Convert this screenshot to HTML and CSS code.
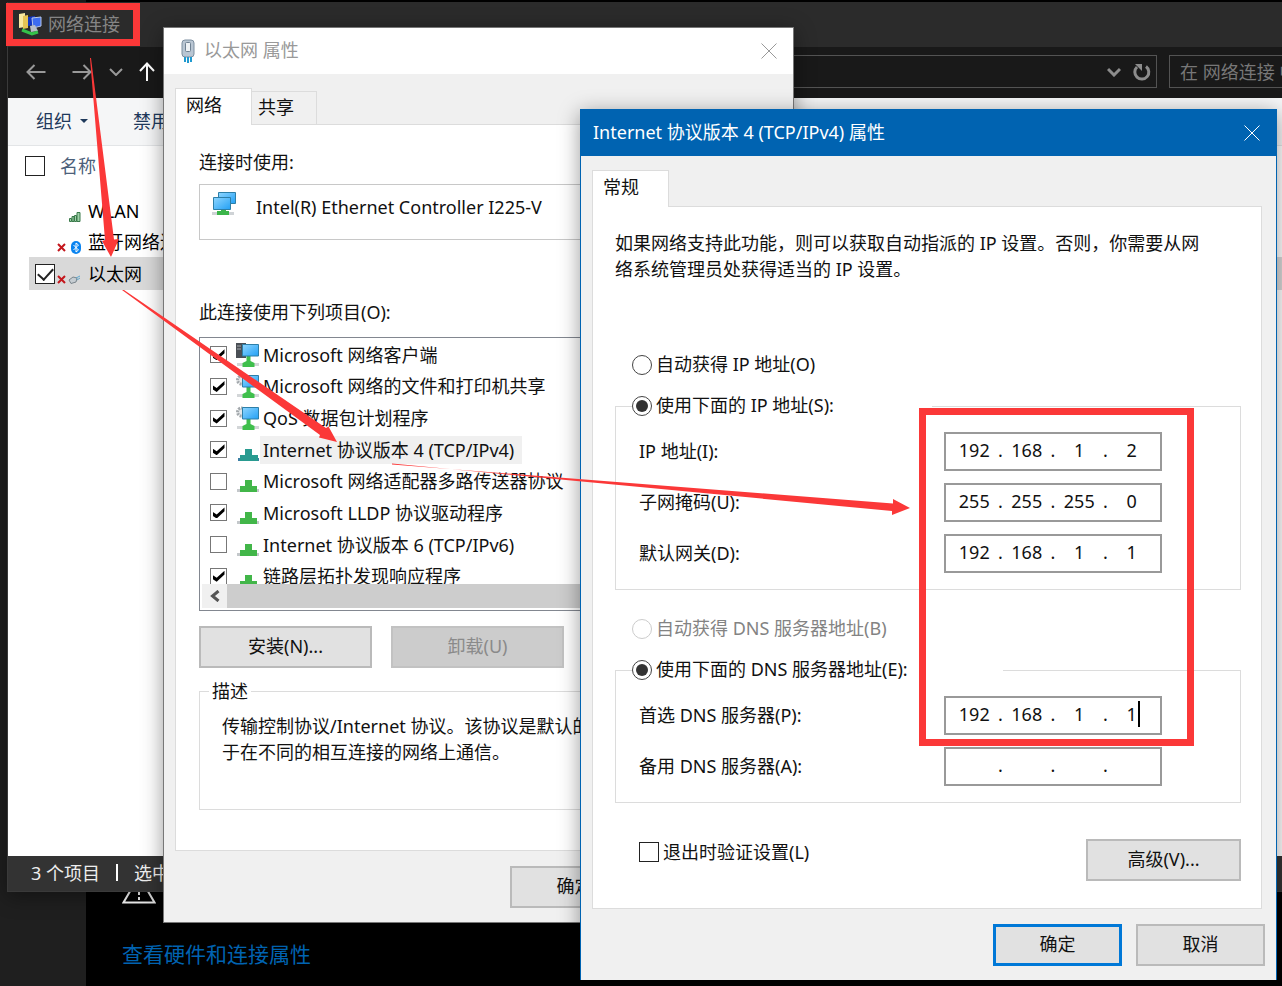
FILE: index.html
```html
<!DOCTYPE html>
<html lang="zh-CN">
<head>
<meta charset="utf-8">
<title>网络连接</title>
<link rel="stylesheet" href="styles.css">
</head>
<body>
<svg class="defs" aria-hidden="true">
  <defs>
    <linearGradient id="screen" x1="0" y1="0" x2="1" y2="1"><stop offset="0" stop-color="#8fd6ff"/><stop offset="1" stop-color="#22a0f5"/></linearGradient>
  </defs>
  <symbol id="monitor" viewBox="0 0 24 24">
    <path d="M1 20h22v3H1z" fill="#d3d6d8"/>
    <path d="M10.500 13h4v5l4 2v4h-12v-4l4-2z" fill="#3fbf4c"/>
    <path d="M6.500 1.500h16v11.500h-16z" fill="url(#screen)" stroke="#2d7fa8"/>
  </symbol>
  <symbol id="client" viewBox="0 0 24 24">
    <path d="M0 0h10v15H0z" fill="#4a4f55"/><path d="M1 3h4M1 6h4" stroke="#a5aaaf"/>
    <use href="#monitor"/>
  </symbol>
  <symbol id="service" viewBox="0 0 24 24">
    <circle cx="5.500" cy="6" r="4" fill="#e4e7e9" stroke="#a3a8ac" stroke-width="3" stroke-dasharray="2 1"/>
    <use href="#monitor"/>
  </symbol>
  <symbol id="protocol" viewBox="0 0 24 24">
    <path d="M1 20h22v3H1z" fill="#c4c8cb"/><path d="M9 11h7v6h5v6H4v-6h5z" fill="#42b649"/>
  </symbol>
  <symbol id="protocol-on" viewBox="0 0 24 24">
    <path d="M2 20h21v3H2z" fill="#3b7fa4"/><path d="M9 11h7v6h6v6H4v-6h5z" fill="#299b90"/>
  </symbol>
  <symbol id="close" viewBox="0 0 16 16"><path d="M.5.5l15 15M15.500.5l-15 15" fill="none" stroke="currentColor"/></symbol>
  <symbol id="cross" viewBox="0 0 9 9"><path d="M1 1l7 7M8 1L1 8" stroke="#c4161c" stroke-width="2"/></symbol>
</svg>

<div class="desktop">
  <aside class="settings-side"></aside>
  <main class="settings-main">
    <svg class="warn" viewBox="0 0 34 30"><path d="M17 2L1.500 28.500h31z" fill="none" stroke="#fff" stroke-width="2"/><path d="M17 10v11M17 23v3" stroke="#fff" stroke-width="2"/></svg>
    <a class="settings-link" href="#">查看硬件和连接属性</a>
  </main>

  <section class="window explorer">
    <header class="ex-title">
      <svg width="24" height="24" viewBox="0 0 24 24">
        <path d="M1 2l6-1v14l-6 1z" fill="#f8e9a0"/><path d="M5 4l5-1v13l-5 1z" fill="#e5c455"/>
        <path d="M10 5l7-1v9l-7 1z" fill="#1237c4"/><path d="M14 6l9-1v9l-8 2z" fill="#3d6df0" stroke="#b9c8e8"/>
        <path d="M12 14l5-1 3 6-7 1z" fill="#b8c0c8"/><path d="M4 18l10 4 6-2" fill="none" stroke="#35c24a" stroke-width="3"/>
      </svg>
      <span>网络连接</span>
    </header>
    <nav class="ex-nav">
      <button class="nav-btn" aria-label="后退"><svg width="20" height="16" viewBox="0 0 20 16"><path d="M19.500 8H1.500M8.500 1l-7 7 7 7" class="line"/></svg></button>
      <button class="nav-btn" aria-label="前进"><svg width="20" height="16" viewBox="0 0 20 16"><path d="M.5 8h18M11.500 1l7 7-7 7" class="line"/></svg></button>
      <button class="nav-btn recent" aria-label="最近"><svg width="14" height="8" viewBox="0 0 14 8"><path d="M1 1l6 6 6-6" class="line"/></svg></button>
      <button class="nav-btn up" aria-label="上移"><svg width="16" height="19" viewBox="0 0 16 19"><path d="M8 19V2M1 9l7-7.500L15 9" class="line"/></svg></button>
      <div class="address">
        <button class="nav-btn" aria-label="历史"><svg width="14" height="10" viewBox="0 0 14 10"><path d="M1 2l6 6 6-6" class="bold"/></svg></button>
        <button class="nav-btn" aria-label="刷新"><svg width="18" height="18" viewBox="0 0 18 18"><path d="M13 3.500a7 7 0 1 1-9 .5" class="bold"/><path d="M2 1h7v7z" fill="#8c8c8c"/></svg></button>
      </div>
      <input class="search" type="text" aria-label="搜索" placeholder="在 网络连接 中搜索">
    </nav>
    <div class="ex-commands">
      <button>组织<i class="caret-down"></i></button>
      <button>禁用</button>
    </div>
    <div class="ex-files">
      <div class="ex-head"><input type="checkbox" class="box" id="all"><label for="all">名称</label></div>
      <ul class="ex-list">
        <li>
          <span class="pick"></span>
          <span class="state"><svg width="12" height="10" viewBox="0 0 12 10"><path d="M.5 9.500v-3h2v3zM3 9.500v-5h2v5zM5.500 9.500v-6h2v6zM8 9.500v-9h3v9z" fill="#9fd0a8" stroke="#3a7a4b"/></svg></span>
          <span>WLAN</span>
        </li>
        <li>
          <span class="pick"></span>
          <span class="state"><svg width="9" height="9"><use href="#cross"/></svg><svg width="10" height="13" viewBox="0 0 10 13"><rect width="10" height="13" rx="5" fill="#0a84f0"/><path d="M2.500 4l5 5L5 11V2l2.500 2-5 5" fill="none" stroke="#fff"/></svg></span>
          <span>蓝牙网络连接</span>
        </li>
        <li class="selected">
          <span class="pick"><input type="checkbox" class="box" checked aria-label="以太网"></span>
          <span class="state"><svg width="9" height="9"><use href="#cross"/></svg><svg width="13" height="9" viewBox="0 0 13 9"><path d="M1 5l4-3 4 1-1 4-5 1.500z" fill="#c6cdd2" stroke="#7a858c"/><path d="M8 3l4-2M9 5l3-2" stroke="#5aa7d0"/></svg></span>
          <span>以太网</span>
        </li>
      </ul>
    </div>
    <footer class="ex-status"><span>3 个项目</span><i class="divider"></i><span>选中 1 个项目</span></footer>
  </section>

  <section class="window dialog ethernet" role="dialog" aria-label="以太网 属性">
    <header class="dlg-title">
      <svg width="16" height="24" viewBox="0 0 16 24"><rect x="2" y="1" width="12" height="17" rx="3" fill="#b9c6d3" stroke="#7d8fa0"/><rect x="5.500" y="3.500" width="5" height="9" rx="1" fill="#eef2f5" stroke="#6f8192"/><path d="M5 18v5M8 18v6M11 18v5" stroke="#1f9ad0" stroke-width="2"/></svg>
      <h2>以太网 属性</h2>
      <button class="close" aria-label="关闭"><svg width="16" height="16"><use href="#close"/></svg></button>
    </header>
    <div class="dlg-body">
      <div class="tabs" role="tablist"><button class="tab active" role="tab">网络</button><button class="tab" role="tab">共享</button></div>
      <div class="panel" role="tabpanel">
        <p>连接时使用:</p>
        <div class="adapter">
          <svg width="24" height="24" viewBox="0 0 24 24"><path d="M0 20h22v3H0z" fill="#cfd3d6"/><path d="M9 17h5v2h3v4H5v-4h4z" fill="#3cb54a"/><path d="M6.500.5h17v11h-17z" fill="url(#screen)" stroke="#2d7fa8"/><path d="M1.500 5.500h17v12h-17z" fill="url(#screen)" stroke="#2d7fa8"/></svg>
          <span>Intel(R) Ethernet Controller I225-V</span>
        </div>
        <p class="items-label">此连接使用下列项目(O):</p>
        <div class="items">
          <div class="items-view">
            <ul>
              <li><label><input type="checkbox" class="tick" checked><svg><use href="#client"/></svg><span>Microsoft 网络客户端</span></label></li>
              <li><label><input type="checkbox" class="tick" checked><svg><use href="#service"/></svg><span>Microsoft 网络的文件和打印机共享</span></label></li>
              <li><label><input type="checkbox" class="tick" checked><svg><use href="#service"/></svg><span>QoS 数据包计划程序</span></label></li>
              <li class="current"><label><input type="checkbox" class="tick" checked><svg><use href="#protocol-on"/></svg><span>Internet 协议版本 4 (TCP/IPv4)</span></label></li>
              <li><label><input type="checkbox" class="tick"><svg><use href="#protocol"/></svg><span>Microsoft 网络适配器多路传送器协议</span></label></li>
              <li><label><input type="checkbox" class="tick" checked><svg><use href="#protocol"/></svg><span>Microsoft LLDP 协议驱动程序</span></label></li>
              <li><label><input type="checkbox" class="tick"><svg><use href="#protocol"/></svg><span>Internet 协议版本 6 (TCP/IPv6)</span></label></li>
              <li><label><input type="checkbox" class="tick" checked><svg><use href="#protocol"/></svg><span>链路层拓扑发现响应程序</span></label></li>
            </ul>
          </div>
          <div class="scroll"><button aria-label="向左滚动"><svg width="10" height="12" viewBox="0 0 10 12"><path d="M8.500 1l-6 5 6 5" fill="none" stroke="#555" stroke-width="3"/></svg></button><div class="thumb"></div></div>
        </div>
        <div class="actions"><button class="btn">安装(N)...</button><button class="btn" disabled>卸载(U)</button></div>
        <fieldset class="about">
          <legend>描述</legend>
          <p>传输控制协议/Internet 协议。该协议是默认的<br>于在不同的相互连接的网络上通信。</p>
        </fieldset>
      </div>
      <div class="dlg-footer"><button class="btn">确定</button><button class="btn">取消</button></div>
    </div>
  </section>

  <section class="window dialog ipv4" role="dialog" aria-label="Internet 协议版本 4 (TCP/IPv4) 属性">
    <header class="dlg-title">
      <h2>Internet 协议版本 4 (TCP/IPv4) 属性</h2>
      <button class="close" aria-label="关闭"><svg width="16" height="16"><use href="#close"/></svg></button>
    </header>
    <div class="dlg-body">
      <div class="tabs" role="tablist"><button class="tab active" role="tab">常规</button></div>
      <div class="panel" role="tabpanel">
        <p>如果网络支持此功能，则可以获取自动指派的 IP 设置。否则，你需要从网<br>络系统管理员处获得适当的 IP 设置。</p>
        <label class="choice ip-auto"><input type="radio" name="ip"><span>自动获得 IP 地址(O)</span></label>
        <fieldset class="group">
          <legend><label class="choice"><input type="radio" name="ip" checked><span>使用下面的 IP 地址(S):</span></label></legend>
          <div class="row"><label for="ip1">IP 地址(I):</label>
            <div class="ip"><input id="ip1" value="192"><b>.</b><input aria-label="2" value="168"><b>.</b><input aria-label="3" value="1"><b>.</b><input aria-label="4" value="2"></div></div>
          <div class="row"><label for="mask1">子网掩码(U):</label>
            <div class="ip"><input id="mask1" value="255"><b>.</b><input aria-label="2" value="255"><b>.</b><input aria-label="3" value="255"><b>.</b><input aria-label="4" value="0"></div></div>
          <div class="row"><label for="gw1">默认网关(D):</label>
            <div class="ip"><input id="gw1" value="192"><b>.</b><input aria-label="2" value="168"><b>.</b><input aria-label="3" value="1"><b>.</b><input aria-label="4" value="1"></div></div>
        </fieldset>
        <label class="choice dns-auto"><input type="radio" name="dns" disabled><span>自动获得 DNS 服务器地址(B)</span></label>
        <fieldset class="group wide">
          <legend><label class="choice"><input type="radio" name="dns" checked><span>使用下面的 DNS 服务器地址(E):</span></label></legend>
          <div class="row"><label for="dns1">首选 DNS 服务器(P):</label>
            <div class="ip"><input id="dns1" value="192"><b>.</b><input aria-label="2" value="168"><b>.</b><input aria-label="3" value="1"><b>.</b><input aria-label="4" value="1"><i class="cursor"></i></div></div>
          <div class="row"><label for="alt1">备用 DNS 服务器(A):</label>
            <div class="ip"><input id="alt1"><b>.</b><input aria-label="2"><b>.</b><input aria-label="3"><b>.</b><input aria-label="4"></div></div>
        </fieldset>
        <div class="verify">
          <label><input type="checkbox" class="box">退出时验证设置(L)</label>
          <button class="btn">高级(V)...</button>
        </div>
      </div>
      <div class="dlg-footer"><button class="btn primary">确定</button><button class="btn">取消</button></div>
    </div>
  </section>

  <svg class="marks" width="1282" height="986" aria-hidden="true">
    <g fill="none" stroke="#fb3838" stroke-width="7">
      <rect x="9.500" y="6.500" width="127" height="36"/>
      <rect x="922.500" y="411.500" width="268" height="331"/>
    </g>
    <g fill="#fb3838">
      <path d="M90 58L105 240L102 241L111 257L119 239L114 239.500L91 58z"/>
      <path d="M122 290L320 435L319 437.500L337 442L328.500 426.500L326 428L124 290z"/>
      <path d="M392 463.500L892 511L892 515L910 508L893 499L893 503.500L392 464.500z"/>
    </g>
  </svg>
</div>
</body>
</html>
```
FILE: styles.css
```css
* { box-sizing: border-box; }

body, button, input {
  font-family: "Noto Sans", "Noto Sans CJK SC", sans-serif;
  font-size: 18px;
  line-height: 26px;
}

body { margin: 0; background: #000; color: #111; }
p, h2, ul { margin: 0; padding: 0; list-style: none; }
button { padding: 0; border: 0; background: none; color: inherit; }
svg { flex: none; display: block; }
.defs { position: absolute; width: 0; height: 0; }

.desktop {
  position: relative;
  display: flex;
  min-height: 100vh;
  overflow: hidden;
  white-space: nowrap;
}

/* settings page behind the windows */
.settings-side { width: 86px; background: #1f1f1f; }
.settings-main {
  flex: 1;
  display: flex;
  flex-direction: column;
  justify-content: flex-end;
  align-items: flex-start;
  gap: 35px;
  padding: 0 36px 17px;
}
.warn { width: 34px; height: 30px; }
.settings-link { color: #0063b1; font-size: 21px; line-height: 30px; text-decoration: none; }

.window { position: absolute; box-shadow: 0 4px 20px rgba(0, 0, 0, .4); }

/* explorer */
.explorer { left: 7px; right: -80px; top: 2px; border: 1px solid #3a3a3a; border-top: 0; }
.ex-title {
  display: flex;
  align-items: center;
  gap: 6px;
  height: 45px;
  padding: 0 0 2px 10px;
  background: #2b2b2b;
  color: #858585;
}
.ex-nav {
  display: flex;
  align-items: center;
  height: 51px;
  padding: 0 12px 2px 18px;
  gap: 12px;
  background: #191919;
}
.nav-btn { display: flex; justify-content: center; align-items: center; width: 34px; height: 34px; margin-left: -7px; }
.nav-btn + .nav-btn { margin-left: 0; }
.ex-nav > .nav-btn.recent { width: 14px; margin-left: -2px; }
.ex-nav > .nav-btn.up { width: 16px; margin-left: 4px; }
.line { fill: none; stroke: #999; stroke-width: 2; }
.up .line { stroke: #fff; }
.bold { fill: none; stroke: #8c8c8c; stroke-width: 3; }
.address {
  flex: 1;
  display: flex;
  justify-content: flex-end;
  height: 33px;
  border: 1px solid #535353;
}
.address .nav-btn { width: 28px; height: 31px; }
.search {
  width: 180px;
  height: 33px;
  padding: 0 10px;
  border: 1px solid #535353;
  background: #191919;
  color: #ddd;
}
.search::placeholder { color: #777; opacity: 1; }
.ex-commands {
  display: flex;
  gap: 45px;
  height: 48px;
  padding: 0 0 2px 28px;
  border-bottom: 1px solid #e3e5e7;
  background: #f5f6f7;
  color: #1e395b;
}
.ex-commands button { display: flex; align-items: center; gap: 8px; }
.caret-down { border: 4px solid transparent; border-top-color: #1e395b; border-bottom: 0; }
.ex-files { min-height: 710px; background: #fff; color: #000; }
.ex-head { display: flex; align-items: center; gap: 15px; height: 40px; padding-left: 17px; color: #4c607a; }
.ex-list { padding: 9px 0 0 21px; }
.ex-list li { display: flex; align-items: center; height: 31px; }
.ex-list .selected { height: 33px; background: #d9d9d9; }
.pick { width: 28px; padding-left: 6px; }
.state { display: flex; justify-content: flex-end; align-items: center; gap: 5px; width: 24px; margin-right: 7px; padding-top: 12px; }
.selected .state { gap: 2px; }
.ex-status { display: flex; align-items: center; gap: 16px; height: 35px; padding: 0 0 2px 23px; background: #333; color: #eee; }
.divider { width: 2px; height: 17px; background: #fff; }

/* form controls */
.box, .tick, .choice input { appearance: none; flex: none; display: grid; place-items: center; margin: 0; background: #fff; }
.box { width: 20px; height: 20px; border: 1px solid #222; }
.box:checked::before {
  content: "";
  width: 7px;
  height: 13px;
  margin-bottom: 5px;
  border: solid #222;
  border-width: 0 2px 2px 0;
  transform: rotate(42deg);
}
.tick { width: 17px; height: 17px; border: 1px solid #777; }
.tick:checked::before {
  content: "";
  width: 12px;
  height: 11px;
  background: #000;
  clip-path: polygon(0 40%, 35% 65%, 100% 0, 100% 35%, 35% 100%, 0 75%);
}
.choice { display: flex; align-items: center; gap: 4px; width: max-content; height: 28px; }
.choice input { width: 20px; height: 20px; border: 1px solid #444; border-radius: 50%; }
.choice input:checked::before { content: ""; width: 12px; height: 12px; border-radius: 50%; background: #333; }
.choice input:disabled { border-color: #ccc; }
.choice span { padding-bottom: 3px; }
.btn { width: 129px; height: 42px; padding-bottom: 2px; border: 2px solid #bababa; background: #e1e1e1; color: #111; }
.btn:disabled { border-color: #c2c2c2; background: #ccc; color: #8a8a8a; }
.btn.primary { border: 3px solid #0078d7; }

/* property dialogs */
.dialog { background: #f0f0f0; }
.dlg-title { display: flex; align-items: center; gap: 8px; height: 46px; }
.dlg-title h2 { flex: 1; padding-bottom: 2px; font-size: 18px; font-weight: 400; }
.close { padding: 8px; margin-right: 8px; }
.dlg-body { padding: 14px 11px; }
.tabs { display: flex; align-items: flex-end; }
.tab { height: 33px; padding: 0 22px 2px 6px; border: 1px solid #dcdcdc; border-left: 0; border-bottom: 0; }
.tab.active { height: 37px; margin-bottom: -1px; padding: 0 29px 4px 10px; border-left: 1px solid #dcdcdc; background: #fff; }
.panel { border: 1px solid #dcdcdc; background: #fff; }
.dlg-footer { display: flex; justify-content: flex-end; gap: 14px; padding-top: 15px; }
fieldset { margin: 0; min-width: 0; border: 1px solid #dcdcdc; }

.ethernet { left: 163px; top: 27px; width: 631px; border: 1px solid #777; }
.ethernet .dlg-title { padding-left: 16px; background: #fff; color: #999; }
.ethernet .panel { padding: 24px 23px 40px; }
.adapter { display: flex; gap: 20px; height: 56px; margin-top: 9px; padding: 7px 12px; border: 1px solid #c8c8c8; }
.adapter span { padding-top: 2px; }
.items-label { margin-top: 59px; }
.items { margin-top: 12px; padding: 2px; border: 1px solid #828790; }
.items-view { height: 244px; overflow: hidden; }
.items ul { display: grid; grid-template-rows: repeat(8, 1fr); height: 253px; }
.items li { display: flex; align-items: stretch; }
.items label { display: flex; align-items: center; padding: 0 0 2px 8px; }
.items label svg { width: 24px; height: 24px; margin: 0 0 0 9px; }
.items label span { padding: 1px 8px 1px 3px; }
.current label span { background: #f0f0f0; }
.scroll { display: flex; height: 24px; background: #f0f0f0; }
.scroll button { display: grid; place-items: center; width: 25px; }
.thumb { flex: 1; background: #cdcdcd; }
.actions { display: flex; gap: 19px; margin-top: 15px; }
.actions .btn { width: 173px; }
.about { margin-top: 10px; padding: 9px 22px 44px; }
.about legend { margin-left: -13px; padding: 0 3px; }

.ipv4 { left: 580px; top: 109px; width: 697px; border: 1px solid #0063b1; border-bottom-width: 0; }
.ipv4 .dlg-title { padding-left: 12px; background: #0063b1; color: #fff; }
.ipv4 .panel { margin-right: 3px; padding: 23px 20px 27px 22px; }
.ip-auto { margin: 69px 0 13px 17px; }
.dns-auto { margin: 25px 0 13px 17px; color: #838383; }
.group { display: grid; gap: 12px; padding: 12px 78px 16px 23px; }
.group legend { width: 300px; height: 28px; margin-left: -7px; padding: 0; }
.group.wide legend { width: 371px; }
.row { display: flex; justify-content: space-between; align-items: center; }
.row > label { padding-bottom: 2px; }
.ip { position: relative; display: flex; align-items: center; width: 218px; height: 39px; padding: 0 6px 4px; border: 2px solid #999; }
.ip input { flex: 1; width: 0; min-width: 0; padding: 0; border: 0; background: none; text-align: center; color: #111; }
.ip b { width: 8px; font-weight: 400; text-align: center; }
.cursor { position: absolute; right: 20px; top: 3px; width: 2px; height: 26px; background: #000; }
.verify { display: flex; justify-content: space-between; align-items: center; margin-top: 36px; padding-left: 24px; }
.verify label { display: flex; align-items: center; gap: 4px; padding-bottom: 16px; }
.verify .btn { width: 155px; }

/* red annotations drawn over the windows */
.marks { position: absolute; left: 0; top: 0; pointer-events: none; }
```
